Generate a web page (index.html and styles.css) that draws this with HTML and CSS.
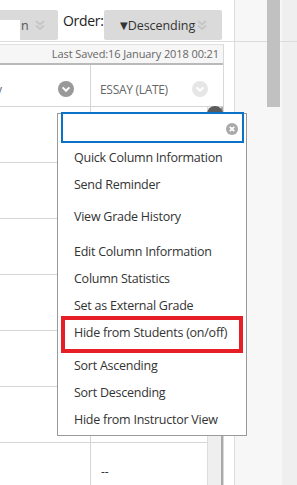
FILE: index.html
```html
<!DOCTYPE html>
<html lang="en">
<head>
<meta charset="utf-8">
<title>Grade Centre</title>
<link rel="stylesheet" href="styles.css">
</head>
<body>
<div class="main">
  <div class="toolbar">
    <div class="btn btn-filter">
      <span class="filter-input"></span>
      <span class="btn-label">n</span>
      <svg class="chev" width="10" height="10" viewBox="0 0 10 10"><polyline points="1,1 5,4.5 9,1"/><polyline points="1,5.5 5,9 9,5.5"/></svg>
    </div>
    <span class="order-label">Order:</span>
    <div class="btn btn-order">
      <span class="btn-label"><span class="tri">▼</span>Descending</span>
      <svg class="chev" width="10" height="10" viewBox="0 0 10 10"><polyline points="1,1 5,4.5 9,1"/><polyline points="1,5.5 5,9 9,5.5"/></svg>
    </div>
  </div>

  <div class="grid">
    <div class="saved">Last Saved:16 January 2018 00:21</div>
    <div class="head">
      <div class="hcell h1">
        <span class="cut">y</span>
        <svg class="circ" width="16" height="16" viewBox="0 0 16 16"><circle cx="8" cy="8" r="8" class="dark"/><polyline points="4.6,6.4 8,9.8 11.4,6.4"/></svg>
      </div>
      <div class="hcell h2">
        <span class="htext">ESSAY (LATE)</span>
        <svg class="circ" width="16" height="16" viewBox="0 0 16 16"><circle cx="8" cy="8" r="8" class="light"/><polyline points="4.6,6.4 8,9.8 11.4,6.4"/></svg>
      </div>
    </div>
    <div class="body">
      <div class="rows">
        <div class="row"><div class="c1"></div><div class="c2"></div></div>
        <div class="row"><div class="c1"></div><div class="c2"></div></div>
        <div class="row"><div class="c1"></div><div class="c2"></div></div>
        <div class="row"><div class="c1"></div><div class="c2"></div></div>
        <div class="row"><div class="c1"></div><div class="c2"></div></div>
        <div class="row"><div class="c1"></div><div class="c2"></div></div>
        <div class="row"><div class="c1"></div><div class="c2 dash">--</div></div>
      </div>
      <div class="strip"><span class="knob"></span></div>
    </div>
  </div>

  <div class="menu">
    <div class="search">
      <svg class="clear" width="12" height="12" viewBox="0 0 12 12"><circle cx="6" cy="6" r="6"/><path d="M3.8 3.8 L8.2 8.2 M8.2 3.8 L3.8 8.2"/></svg>
    </div>
    <ul class="group g1">
      <li>Quick Column Information</li>
      <li>Send Reminder</li>
    </ul>
    <ul class="group g2">
      <li>View Grade History</li>
    </ul>
    <ul class="group g3">
      <li>Edit Column Information</li>
      <li>Column Statistics</li>
      <li>Set as External Grade</li>
      <li class="marked">Hide from Students (on/off)</li>
    </ul>
    <ul class="group g4">
      <li>Sort Ascending</li>
      <li>Sort Descending</li>
      <li>Hide from Instructor View</li>
    </ul>
  </div>
</div>
<div class="side">
  <div class="gutter"></div>
  <div class="track"><div class="thumb"></div></div>
  <div class="rest"></div>
</div>
</body>
</html>
```

FILE: styles.css
```css
* { box-sizing: border-box; }
html, body { margin: 0; padding: 0; }
body {
  width: 297px;
  height: 485px;
  overflow: hidden;
  display: flex;
  font-family: "Open Sans", "Liberation Sans", sans-serif;
  color: #333;
  background: #fff;
}

.main {
  position: relative;
  width: 235px;
  height: 485px;
  border-right: 1px solid #dcdcdc;
  flex: none;
}

/* toolbar */
.toolbar {
  height: 42px;
  border-bottom: 1px solid #dcdcdc;
  display: flex;
  align-items: flex-start;
  padding-top: 10px;
}
.btn {
  height: 30px;
  background: #dadada;
  border-radius: 2px;
  display: flex;
  align-items: center;
  font-size: 12.5px;
  letter-spacing: -0.05px;
  color: #333;
}
.btn-filter {
  width: 58px;
  border-radius: 0 2px 2px 0;
}
.filter-input {
  align-self: flex-end;
  width: 20px;
  height: 20px;
  background: #fff;
}
.btn-filter .btn-label { color: #555; padding-left: 1px; }
.chev {
  margin-left: auto;
  fill: none;
  stroke: #c6c6c6;
  stroke-width: 2;
  flex: none;
}
.btn-filter .chev { margin-right: 13px; }
.order-label {
  width: 46px;
  padding-left: 5px;
  font-size: 14px;
  letter-spacing: -0.3px;
  line-height: 20px;
  color: #222;
  margin-top: 1px;
}
.btn-order {
  width: 118px;
  padding-left: 16px;
}
.tri {
  font-family: "DejaVu Sans", sans-serif;
  font-size: 10px;
  letter-spacing: 0;
  position: relative;
  top: -1px;
}
.btn-order .chev { margin-right: 15px; }

/* grid */
.grid {
  margin-top: 2px;
  width: 224px;
  border-top: 1px solid #e0e0e0;
  border-right: 1px solid #d8d8d8;
}
.saved {
  height: 20px;
  background: #f6f6f6;
  border-bottom: 2px solid #b9b9b9;
  font-size: 11px;
  letter-spacing: -0.1px;
  line-height: 18px;
  color: #666;
  text-align: right;
  padding-right: 4px;
}
.head {
  display: flex;
  height: 42px;
  border-bottom: 1px solid #d4d4d4;
}
.hcell {
  display: flex;
  align-items: center;
  padding-top: 7px;
  overflow: hidden;
}
.h1 {
  width: 91px;
  border-right: 1px solid #d4d4d4;
  padding-right: 16px;
}
.h2 {
  flex: 1;
  padding-left: 9px;
  padding-right: 15px;
}
.cut {
  font-size: 12px;
  color: #666;
  margin-left: -4px;
}
.htext {
  font-size: 12px;
  letter-spacing: -0.3px;
  color: #666;
}
.circ { margin-left: auto; flex: none; }
.circ polyline { fill: none; stroke: #fff; stroke-width: 2; }
.circ .dark { fill: #999; }
.circ .light { fill: #e6e6e6; }

.body {
  display: flex;
}
.rows { flex: 1; }
.row {
  display: flex;
  height: 56px;
  border-bottom: 1px solid #d4d4d4;
}
.c1 {
  width: 91px;
  border-right: 1px solid #d4d4d4;
}
.c2 { flex: 1; }
.dash {
  font-size: 12px;
  color: #333;
  padding-left: 10px;
  padding-top: 20px;
}
.strip {
  width: 16px;
  background: #efefef;
  border-left: 1px solid #dddddd;
  border-right: 2px solid #a9a9a9;
}
.knob {
  display: block;
  width: 16px;
  height: 16px;
  margin-top: -1px;
  margin-left: -1px;
  border-radius: 50%;
  background: #5b5b5b;
}

/* context menu */
.menu {
  position: absolute;
  left: 57px;
  top: 113px;
  width: 190px;
  height: 323px;
  background: #fff;
  border: 1px solid #9a9a9a;
  z-index: 5;
}
.search {
  margin: -2px 2px 0 3px;
  height: 31px;
  border: 2px solid #0a73c8;
  background: #fff;
  display: flex;
  align-items: center;
  justify-content: flex-end;
  padding-right: 4px;
  padding-top: 3px;
}
.clear circle { fill: #a9a9a9; }
.clear path { stroke: #fff; stroke-width: 1.8; fill: none; }

.group {
  list-style: none;
  margin: 0;
  padding: 0;
}
.group li {
  height: 27px;
  line-height: 27px;
  font-size: 12.5px;
  letter-spacing: -0.25px;
  color: #333;
  padding-left: 16px;
  white-space: nowrap;
}
.g1 { margin-top: 1px; }
.g2 { margin-top: 5px; }
.g3 { margin-top: 8px; }
.g4 { margin-top: 6px; }
.group li.marked { position: relative; }
.group li.marked::after {
  content: "";
  position: absolute;
  left: 3px;
  right: 3px;
  top: -3px;
  bottom: -7px;
  border: 4px solid #e81e27;
}

/* page scrollbar */
.side {
  flex: 1;
  display: flex;
  height: 485px;
  background: linear-gradient(#dcdcdc, #dcdcdc) 0 41px / 100% 1px no-repeat, #f7f7f7;
}
.gutter { width: 30px; }
.track {
  width: 17px;
  padding: 0 2px;
}
.thumb {
  height: 107px;
  background: #c1c1c1;
}
.rest {
  flex: 1;
  background: linear-gradient(#dcdcdc, #dcdcdc) 0 41px / 100% 1px no-repeat, #efefef;
}
```
